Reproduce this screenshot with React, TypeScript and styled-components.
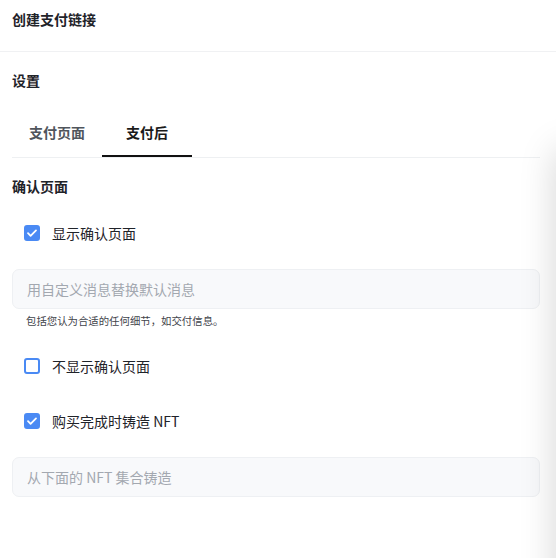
import React, { useState } from "react";
import styled, { createGlobalStyle } from "styled-components";

const GlobalStyle = createGlobalStyle`
  html, body {
    margin: 0;
    padding: 0;
    background: #ffffff;
    overflow: hidden;
  }
  body {
    font-family: "Noto Sans CJK SC", "Noto Sans", sans-serif;
    color: #1f2329;
  }
`;

const Page = styled.div`
  width: 556px;
  height: 558px;
  background: #fff;
`;

const Header = styled.div`
  height: 52px;
  box-sizing: border-box;
  padding: 9px 12px 0;
  border-bottom: 1px solid #f0f1f3;
`;

const Title = styled.div`
  font-size: 14px;
  font-weight: 700;
  line-height: 20px;
`;

const Body = styled.div`
  padding: 0 16px 0 12px;
  display: flex;
  flex-direction: column;
`;

const SectionTitle = styled.div<{ $top: number }>`
  margin-top: ${(p) => p.$top}px;
  font-size: 14px;
  font-weight: 700;
  line-height: 20px;
`;

const TabBar = styled.div`
  margin-top: 19px;
  display: flex;
  border-bottom: 1px solid #eef0f2;
`;

const Tab = styled.div<{ $active?: boolean }>`
  width: 90px;
  height: 48px;
  box-sizing: border-box;
  display: flex;
  align-items: center;
  justify-content: center;
  font-size: 14px;
  font-weight: 700;
  color: ${(p) => (p.$active ? "#1a1a1a" : "#50555c")};
  border-bottom: 2px solid ${(p) => (p.$active ? "#111" : "transparent")};
  cursor: pointer;
`;

const CheckRow = styled.label<{ $top: number }>`
  margin-top: ${(p) => p.$top}px;
  padding-left: 12px;
  height: 20px;
  display: flex;
  align-items: center;
  gap: 12px;
  font-size: 14px;
  color: #1f2329;
  cursor: pointer;
`;

const Box = styled.span<{ $checked: boolean }>`
  width: 16px;
  height: 16px;
  box-sizing: border-box;
  border-radius: 3px;
  border: 2px solid #4a8af4;
  background: ${(p) => (p.$checked ? "#4a8af4" : "#fff")};
  display: flex;
  align-items: center;
  justify-content: center;
`;

const Field = styled.input<{ $top: number }>`
  margin-top: ${(p) => p.$top}px;
  height: 40px;
  box-sizing: border-box;
  width: 100%;
  padding: 0 14px;
  border: 1px solid #eef0f3;
  border-radius: 7px;
  background: #f8f9fb;
  font-family: inherit;
  font-size: 14px;
  color: #1f2329;
  outline: none;
  &::placeholder {
    color: #a3a8b0;
  }
`;

const Hint = styled.div`
  margin-top: 5px;
  padding-left: 14px;
  font-size: 10.4px;
  line-height: 14px;
  color: #3f444b;
`;

const EdgeShadow = styled.div`
  position: fixed;
  top: 150px;
  left: 556px;
  width: 40px;
  height: 600px;
  box-shadow: 0 0 36px rgba(0, 0, 0, 0.17);
`;

const Check = ({ checked }: { checked: boolean }) => (
  <Box $checked={checked}>
    {checked && (
      <svg width="12" height="12" viewBox="0 0 12 12" fill="none">
        <path d="M2 6.2l2.6 2.6L10 3.4" stroke="#fff" strokeWidth="1.8" strokeLinecap="round" strokeLinejoin="round" />
      </svg>
    )}
  </Box>
);

export default function App() {
  const [tab, setTab] = useState(1);
  const [showPage, setShowPage] = useState(true);
  const [mint, setMint] = useState(true);

  return (
    <Page>
      <GlobalStyle />
      <Header>
        <Title>创建支付链接</Title>
      </Header>
      <Body>
        <SectionTitle $top={18}>设置</SectionTitle>
        <TabBar>
          <Tab $active={tab === 0} onClick={() => setTab(0)}>支付页面</Tab>
          <Tab $active={tab === 1} onClick={() => setTab(1)}>支付后</Tab>
        </TabBar>
        <SectionTitle $top={18}>确认页面</SectionTitle>
        <CheckRow $top={27} onClick={() => setShowPage(true)}>
          <Check checked={showPage} />
          显示确认页面
        </CheckRow>
        <Field $top={26} placeholder="用自定义消息替换默认消息" />
        <Hint>包括您认为合适的任何细节，如交付信息。</Hint>
        <CheckRow $top={28} onClick={() => setShowPage(false)}>
          <Check checked={!showPage} />
          不显示确认页面
        </CheckRow>
        <CheckRow $top={35} onClick={() => setMint(!mint)}>
          <Check checked={mint} />
          购买完成时铸造 NFT
        </CheckRow>
        <Field $top={26} placeholder="从下面的 NFT 集合铸造" />
      </Body>
      <EdgeShadow />
    </Page>
  );
}
